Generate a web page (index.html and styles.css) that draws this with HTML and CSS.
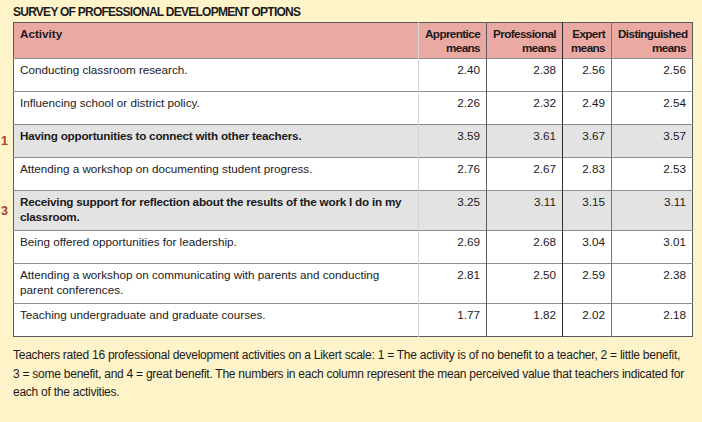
FILE: index.html
```html
<!DOCTYPE html>
<html lang="en">
<head>
<meta charset="utf-8">
<title>Survey of Professional Development Options</title>
<link rel="stylesheet" href="styles.css">
</head>
<body>
<div class="page">
  <h1 class="title">SURVEY OF PROFESSIONAL DEVELOPMENT OPTIONS</h1>
  <table class="survey">
    <colgroup>
      <col class="c-act"><col class="c-app"><col class="c-pro"><col class="c-exp"><col class="c-dis">
    </colgroup>
    <thead>
      <tr>
        <th class="act">Activity</th>
        <th class="num b-app">Apprentice<br>means</th>
        <th class="num b-pro">Professional<br>means</th>
        <th class="num b-exp">Expert<br>means</th>
        <th class="num b-dis">Distinguished<br>means</th>
      </tr>
    </thead>
    <tbody>
      <tr>
        <td class="act">Conducting classroom research.</td>
        <td class="num b-app">2.40</td><td class="num b-pro">2.38</td><td class="num b-exp">2.56</td><td class="num b-dis">2.56</td>
      </tr>
      <tr>
        <td class="act">Influencing school or district policy.</td>
        <td class="num b-app">2.26</td><td class="num b-pro">2.32</td><td class="num b-exp">2.49</td><td class="num b-dis">2.54</td>
      </tr>
      <tr class="hl">
        <td class="act"><span class="rank">1</span>Having opportunities to connect with other teachers.</td>
        <td class="num b-app">3.59</td><td class="num b-pro">3.61</td><td class="num b-exp">3.67</td><td class="num b-dis">3.57</td>
      </tr>
      <tr>
        <td class="act">Attending a workshop on documenting student progress.</td>
        <td class="num b-app">2.76</td><td class="num b-pro">2.67</td><td class="num b-exp">2.83</td><td class="num b-dis">2.53</td>
      </tr>
      <tr class="hl">
        <td class="act"><span class="rank">3</span>Receiving support for reflection about the results of the work I do in my classroom.</td>
        <td class="num b-app">3.25</td><td class="num b-pro">3.11</td><td class="num b-exp">3.15</td><td class="num b-dis">3.11</td>
      </tr>
      <tr>
        <td class="act">Being offered opportunities for leadership.</td>
        <td class="num b-app">2.69</td><td class="num b-pro">2.68</td><td class="num b-exp">3.04</td><td class="num b-dis">3.01</td>
      </tr>
      <tr>
        <td class="act">Attending a workshop on communicating with parents and conducting parent conferences.</td>
        <td class="num b-app">2.81</td><td class="num b-pro">2.50</td><td class="num b-exp">2.59</td><td class="num b-dis">2.38</td>
      </tr>
      <tr>
        <td class="act">Teaching undergraduate and graduate courses.</td>
        <td class="num b-app">1.77</td><td class="num b-pro">1.82</td><td class="num b-exp">2.02</td><td class="num b-dis">2.18</td>
      </tr>
    </tbody>
  </table>
  <p class="caption">Teachers rated 16 professional development activities on a Likert scale: 1 = The activity is of no benefit to a teacher, 2 = little benefit, 3 = some benefit, and 4 = great benefit. The numbers in each column represent the mean perceived value that teachers indicated for each of the activities.</p>
</div>
</body>
</html>
```
FILE: styles.css
```css
html, body {
  margin: 0;
  padding: 0;
  background: #fef3c9;
}

.page {
  width: 702px;
  height: 422px;
  box-sizing: border-box;
  padding: 5px 10px 0 13px;
  color: #1c1a1b;
  font-family: "Liberation Sans", Arial, sans-serif;
}

.title {
  margin: 0 0 2px;
  font-size: 12px;
  line-height: 15px;
  letter-spacing: -0.75px;
  font-weight: bold;
  color: #1c1a1b;
}

.survey {
  width: 679px;
  table-layout: fixed;
  border-collapse: collapse;
  border: 1px solid #5a5a5a;
  font-size: 11.7px;
  line-height: 14.5px;
}

.c-act { width: 405px; }
.c-app { width: 68px; }
.c-pro { width: 76px; }
.c-exp { width: 49px; }
.c-dis { width: 81px; }

.survey thead tr {
  background: #eba9a4;
  height: 36px;
}

.survey th {
  vertical-align: top;
  padding: 4px 6px 3px;
  line-height: 13.5px;
  font-weight: bold;
}

.survey th.num {
  letter-spacing: -0.6px;
}

.survey tbody tr {
  height: 33px;
  background: #ffffff;
  border-top: 1px solid #8c8c8c;
}

.survey tbody tr.hl {
  background: #e3e3e3;
  font-weight: bold;
  letter-spacing: -0.22px;
}

.survey tbody tr.hl .num {
  font-weight: normal;
  letter-spacing: 0;
}

.survey td {
  vertical-align: top;
  padding: 4px 6px 6px;
}

.act {
  text-align: left;
  position: relative;
}

.num {
  text-align: right;
}

.b-app { border-left: 1px solid #d4d4d4; }
.b-pro { border-left: 1px solid #5c5c5c; }
.b-exp { border-left: 1px solid #2e2e2e; }
.b-dis { border-left: 1px solid #777777; }

.rank {
  position: absolute;
  left: -13px;
  top: 50%;
  transform: translateY(-50%);
  font-size: 12.5px;
  font-weight: bold;
  letter-spacing: 0;
  color: #a8412f;
}

.caption {
  max-width: 676px;
  margin: 9px 0 0;
  font-size: 12px;
  line-height: 18.5px;
  letter-spacing: -0.25px;
  color: #1c1a1b;
}
```
